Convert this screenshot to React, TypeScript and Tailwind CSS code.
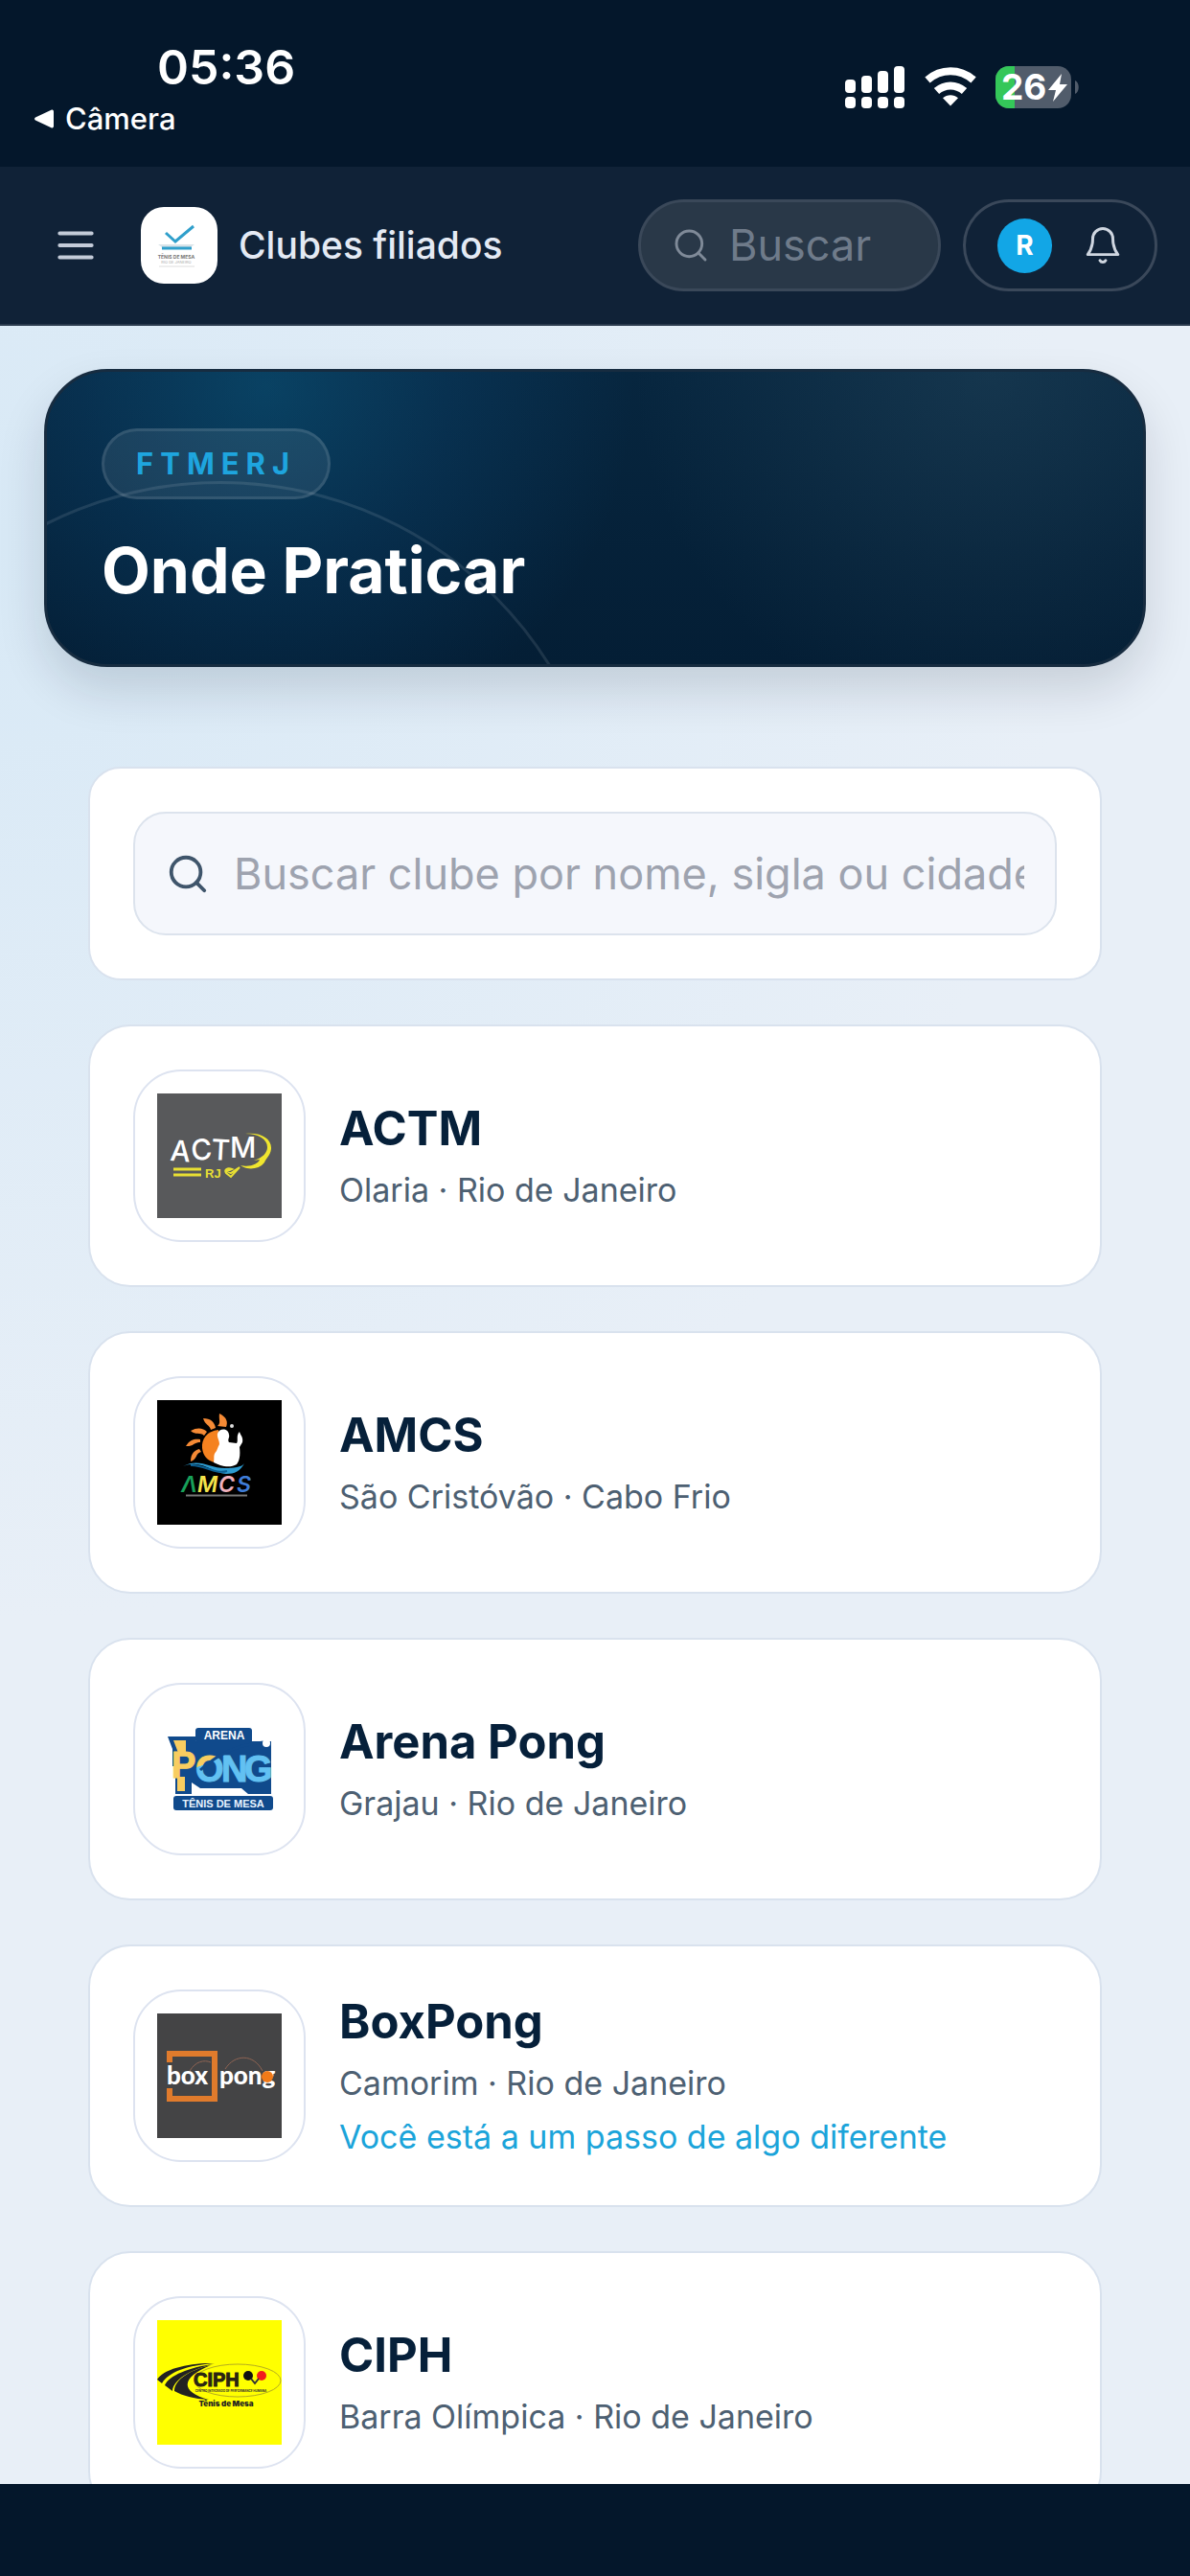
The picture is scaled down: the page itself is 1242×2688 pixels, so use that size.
import { useState } from 'react';
import { Search } from 'lucide-react';

const display = "font-['Inter','Liberation_Sans',sans-serif]";

function StatusBar() {
    return (
        <div className="flex shrink-0 items-start justify-between bg-[#04172b] pl-9 pr-[115px] pt-10 pb-8 text-white">
            <div className="flex flex-col gap-1.5">
                <div className="pl-32 text-[50px] leading-[60px] font-semibold">05:36</div>
                <a href="#camera" className="flex items-center gap-3 text-[31px] leading-9 font-medium">
                    <svg width="20" height="20" viewBox="0 0 20 20" fill="currentColor">
                        <path d="M18 0.5c1 0 2 .6 2 2v15c0 1.400-1 2-2 2L1 11.500c-1.300-.8-1.300-2.200 0-3z" />
                    </svg>
                    Câmera
                </a>
            </div>
            <div className="flex items-center gap-5 pt-7">
                <svg width="64" height="45" viewBox="0 0 64 45" fill="currentColor">
                    <rect x="1" y="15" width="11" height="14" rx="4" />
                    <rect x="18" y="11" width="11" height="18" rx="4" />
                    <rect x="35" y="6" width="11" height="23" rx="4" />
                    <rect x="52" y="1" width="11" height="28" rx="4" />
                    <rect x="1" y="33" width="11" height="12" rx="4" />
                    <rect x="18" y="33" width="11" height="12" rx="4" />
                    <rect x="35" y="33" width="11" height="12" rx="4" />
                    <rect x="52" y="33" width="11" height="12" rx="4" />
                </svg>
                <svg width="54" height="41" viewBox="0 0 54 41" fill="none" stroke="currentColor" strokeWidth="8">
                    <path d="M3 13.500C17 1.200 37 1.200 51 13.500" />
                    <path d="M12.500 25C21 17.500 33 17.500 41.500 25" />
                    <path d="M27 40.500l-8-8.300c4.500-4 11.500-4 16 0z" fill="currentColor" stroke="none" />
                </svg>
                <svg width="88" height="44" viewBox="0 0 88 44">
                    <defs>
                        <clipPath id="battery">
                            <rect width="79" height="44" rx="14" />
                        </clipPath>
                    </defs>
                    <g clipPath="url(#battery)">
                        <rect width="79" height="44" fill="#515c6b" />
                        <rect width="20" height="44" fill="#34c759" />
                    </g>
                    <path d="M83 15c5 2 5 12 0 14z" fill="#515c6b" />
                    <text x="6" y="35" fontSize="37" fontWeight="700" fill="#fff">26</text>
                    <path d="M69 8L55 25h8l-3 12 15-18h-8z" fill="#fff" />
                </svg>
            </div>
        </div>
    );
}

function FederationLogo() {
    return (
        <svg width="80" height="80" viewBox="0 0 80 80" className="shrink-0 rounded-3xl bg-white">
            <path d="M26 27l10 9L55 20" fill="none" stroke="#2f9fcb" strokeWidth="3" />
            <path d="M18 39h38l-4 3H22z" fill="#d9e3e9" />
            <path d="M22 43h31" stroke="#2f9fcb" strokeWidth="3" />
            <text x="37" y="54" fontSize="5" fontWeight="700" textAnchor="middle" fill="#777">TÊNIS DE MESA</text>
            <text x="37" y="59" fontSize="4" textAnchor="middle" fill="#aaa">RIO DE JANEIRO</text>
            <path d="M19 62h37" stroke="#ddd" />
        </svg>
    );
}

function Header() {
    return (
        <header className="flex shrink-0 items-center justify-between border-b-2 border-[#2a3a4d] bg-[#102237] py-[34px] pl-[54px] pr-[34px]">
            <div className="flex items-center gap-[22px]">
                <button type="button" aria-label="Menu" className="mr-[21px] text-[#c3cbd8]">
                    <svg width="50" height="50" viewBox="0 0 24 24" fill="none" stroke="currentColor" strokeWidth="1.900" strokeLinecap="round">
                        <path d="M4 6h16M4 12h16M4 18h16" />
                    </svg>
                </button>
                <FederationLogo />
                <span className="text-[39px] leading-[52px] font-medium text-[#e4eaf4]">Clubes filiados</span>
            </div>
            <div className="flex items-center gap-[23px]">
                <label className="flex h-24 w-[316px] items-center gap-5 rounded-full border-3 border-[#3a4859] bg-[#293848] px-8">
                    <Search size={40} strokeWidth={1.75} className="shrink-0 text-[#7f8a98]" />
                    <input type="text" aria-label="Buscar" placeholder="Buscar" className="w-full min-w-0 bg-transparent text-[45px] leading-[60px] outline-none placeholder:text-[#6f7b8a]" />
                </label>
                <div className="flex h-24 items-center gap-8 rounded-full border-3 border-[#3a485a] px-[33px]">
                    <button type="button" aria-label="Perfil" className="h-[57px] w-[57px] rounded-full bg-[#12a6e6] text-[28px] font-bold text-white">R</button>
                    <button type="button" aria-label="Notificações" className="text-[#cfd6e0]">
                        <svg width="42" height="42" viewBox="0 0 24 24" fill="none" stroke="currentColor" strokeWidth="1.700" strokeLinecap="round" strokeLinejoin="round">
                            <path d="M6 8a6 6 0 0 1 12 0c0 5 1.500 7.500 3 9.500H3C4.500 15.500 6 13 6 8" />
                            <path d="M10.300 21a1.940 1.940 0 0 0 3.400 0" />
                        </svg>
                    </button>
                </div>
            </div>
        </header>
    );
}

function Hero() {
    return (
        <section className="relative overflow-hidden rounded-[66px] border-3 border-[#172c40] bg-[#041c33] bg-[radial-gradient(circle_at_20%_5%,rgba(14,120,170,0.34)_0%,rgba(14,100,160,0.18)_20%,transparent_40%),radial-gradient(circle_at_86%_0%,rgba(70,110,130,0.22)_0%,transparent_36%),linear-gradient(180deg,#07263f,#041e35)] px-[57px] pt-[59px] pb-14 shadow-[0_24px_50px_rgba(4,23,43,0.14)]">
            <div className="absolute -left-[225px] top-[114px] h-[812px] w-[812px] rounded-full border-3 border-white/10" />
            <span className="relative flex w-fit items-center rounded-full border-3 border-white/10 bg-white/8 px-[33px] py-4 text-[31px] leading-9 font-bold tracking-[7px] text-[#1ea5df]">FTMERJ</span>
            <h1 className={`relative mt-8 text-[66px] leading-[84px] font-bold text-white ${display}`}>Onde Praticar</h1>
        </section>
    );
}

function ActmLogo() {
    return (
        <svg width="130" height="130" viewBox="0 0 130 130">
            <rect width="130" height="130" fill="#58595b" />
            <text x="13 36 56 76" y="70 70 69 67" rotate="4 -4 3 0" fontSize="30" fontWeight="500" fill="#fff">ACTM</text>
            <path d="M92 42c16-2 28 5 27 16-1 7-5 9-7 14-6 8-19 8-25 3 10 2 18-1 20-6-2 0-4 1-6 1 9-3 14-8 14-14 0-8-9-14-23-14z" fill="#f0e62e" />
            <path d="M17 79h29M17 85h29" stroke="#e8df33" strokeWidth="3" />
            <text x="50" y="88" fontSize="13" fontWeight="700" fill="#e8df33" fontFamily="Liberation Sans, sans-serif">RJ</text>
            <path d="M78 79c-5-2-8 1-6 4l5 4 9-10-9 6-4-2z" fill="none" stroke="#e8df33" strokeWidth="2" />
        </svg>
    );
}

function AmcsLogo() {
    return (
        <svg width="130" height="130" viewBox="0 0 130 130">
            <rect width="130" height="130" fill="#000" />
            <path d="M64 31c-12 1-18 10-17 19 1 8 5 13 13 15l6-10z" fill="#f58220" />
            <g fill="#f58a35">
                <path d="M63 27c4-3 1-7 2-13 8 4 9 9 7 14z" />
                <path d="M56 31c-1-5-6-5-8-12 8 0 12 4 13 10z" />
                <path d="M49 37c-4-4-9 0-14-5 7-4 13-3 17 1z" />
                <path d="M45 44c-5-1-8 5-15 4 4-7 10-8 15-7z" />
                <path d="M46 54c-6 1-4 8-11 10 0-9 5-12 9-13z" />
            </g>
            <path d="M63 35c2-6 11-6 12 1 1 4-2 5 0 8l8 1c2-3-1-8 3-12 1 4 4 5 3 11l-3 5c1 9 0 14-3 18-8 5-18 1-24-2 1-5-1-8 3-12l2-5c3-4-2-8-1-13z" fill="#fff" />
            <circle cx="78" cy="27" r="2" fill="#ddd" />
            <path d="M27 69c20-8 32 8 45 8 9 0 15-3 19-11-2 4-12 5-20 5-17 0-27-11-44-2z" fill="#2d9bd0" />
            <path d="M35 68c14-1 25 10 38 6" fill="none" stroke="#0b5f92" strokeWidth="2" />
            <g fontSize="23" fontWeight="600" fontStyle="italic">
                <text x="25" y="96" fill="#18a05a">Λ</text>
                <text x="42" y="96" fill="#f4e34b">M</text>
                <text x="64" y="96" fill="#efb1bd">C</text>
                <text x="83" y="96" fill="#3f7dd8">S</text>
            </g>
            <path d="M30 99.500h64" stroke="#777" strokeWidth="2" />
        </svg>
    );
}

function ArenaPongLogo() {
    const bold = 'Liberation Sans, sans-serif';
    return (
        <svg width="130" height="130" viewBox="0 0 130 130">
            <defs>
                {/* yellow above the swing of the ball, blue below it */}
                <linearGradient id="pong" gradientUnits="userSpaceOnUse" x1="50" y1="20" x2="80" y2="85">
                    <stop offset="0.5" stopColor="#f8cd60" />
                    <stop offset="0.5" stopColor="#62c1f2" />
                </linearGradient>
            </defs>
            <path d="M11 31h29v5h79v55H95l-7-6H45l-9-6v12H19V62h-3V44z" fill="#104a8c" />
            <g fontWeight="700" fontSize="38" fontFamily={bold}>
                <text x="15" y="74" fill="#f8cd60" stroke="#f8cd60">P</text>
                <text x="40 67 91" y="78" fill="url(#pong)" stroke="url(#pong)">ONG</text>
            </g>
            <path d="M17 35h13v13h-8zM21 73h8v15h-8z" fill="#f8cd60" />
            <path d="M45 66c18-16 36-26 66-29" fill="none" stroke="#104a8c" strokeWidth="3" />
            <circle cx="114" cy="38" r="4" fill="#fff" />
            <rect x="40" y="22" width="59" height="16" rx="3" fill="#104a8c" />
            <text x="70" y="34" fontSize="12" fontWeight="700" textAnchor="middle" fill="#fff" fontFamily={bold}>ARENA</text>
            <rect x="17" y="93" width="104" height="15" rx="3" fill="#104a8c" />
            <text x="69" y="105" fontSize="11" fontWeight="700" textAnchor="middle" fill="#e8f4ff" fontFamily={bold}>TÊNIS DE MESA</text>
        </svg>
    );
}

function BoxPongLogo() {
    return (
        <svg width="130" height="130" viewBox="0 0 130 130">
            <rect width="130" height="130" fill="#444445" />
            <path d="M13 51V42h47v47H13V78" fill="none" stroke="#e07b2c" strokeWidth="6" />
            <path d="M34 60c6-10 15-12 22-9M71 58c10-16 30-16 39 2" fill="none" stroke="#8f6453" />
            <g fontWeight="900" fill="#fff" fontFamily="Lato, sans-serif">
                <text x="10" y="74" fontSize="26">box</text>
                <text x="65" y="74" fontSize="26">pong</text>
            </g>
            <circle cx="115" cy="66" r="6" fill="#f27a18" />
        </svg>
    );
}

function CiphLogo() {
    return (
        <svg width="130" height="130" viewBox="0 0 130 130">
            <rect width="130" height="130" fill="#ff0" />
            <ellipse cx="84" cy="63" rx="45" ry="17" fill="none" stroke="#b5ad20" />
            <g fill="#222">
                <path d="M60 45C34 44 6 51 0 62l5 4c7-12 27-19 55-21z" />
                <path d="M58 46C34 49 12 58 8 68l8 6c1-12 18-22 42-28z" />
                <path d="M56 47C34 52 18 62 18 74c9 5 20 8 36 9C24 75 24 60 56 47z" />
            </g>
            <text x="38" y="69" fontSize="20" fontWeight="700" fill="#2a2512" stroke="#2a2512" fontFamily="Liberation Sans, sans-serif">CIPH</text>
            <circle cx="95" cy="58" r="5" fill="#111" />
            <circle cx="109" cy="58" r="5" fill="#f21d1d" />
            <path d="M98 61l4 5 4-5" fill="none" stroke="#333" strokeWidth="2" />
            <text x="77" y="75" fontSize="3" fontWeight="700" textAnchor="middle" fill="#333">CENTRO INTEGRADO DE PERFORMANCE HUMANA</text>
            <text x="72" y="90" fontSize="8" fontWeight="900" textAnchor="middle" fill="#222">Tênis de Mesa</text>
        </svg>
    );
}

const clubs = [
    { name: 'ACTM', place: 'Olaria · Rio de Janeiro', Logo: ActmLogo },
    { name: 'AMCS', place: 'São Cristóvão · Cabo Frio', Logo: AmcsLogo },
    { name: 'Arena Pong', place: 'Grajau · Rio de Janeiro', Logo: ArenaPongLogo },
    { name: 'BoxPong', place: 'Camorim · Rio de Janeiro', note: 'Você está a um passo de algo diferente', Logo: BoxPongLogo },
    { name: 'CIPH', place: 'Barra Olímpica · Rio de Janeiro', Logo: CiphLogo },
];

function ClubCard({ club }: any) {
    const { name, place, note, Logo } = club;
    return (
        <li className="flex items-center gap-[35px] rounded-[44px] border-2 border-[#d9e2ee] bg-white p-[45px]">
            <div className="flex h-[180px] w-[180px] shrink-0 items-center justify-center rounded-[50px] border-2 border-[#dde3f0] bg-white">
                <Logo />
            </div>
            <div className="flex min-w-0 flex-col gap-1.5">
                <h2 className={`text-[49px] leading-[66px] font-bold text-[#06203a] ${display}`}>{name}</h2>
                <p className="text-[34px] leading-[50px] text-[#4d6072]">{place}</p>
                {note && <p className="text-[34px] leading-[50px] text-[#1ba4da]">{note}</p>}
            </div>
        </li>
    );
}

function App() {
    const [search, setSearch] = useState('');
    const filtered = clubs.filter((c) => `${c.name} ${c.place}`.toLowerCase().includes(search.toLowerCase()));

    return (
        <div className="flex h-screen flex-col bg-[#04172b] font-['Inter','Liberation_Sans',sans-serif]">
            <StatusBar />
            <Header />
            <main className="min-h-0 flex-1 overflow-y-auto bg-[#e8eff7] bg-[radial-gradient(ellipse_90%_50%_at_0%_10%,#d8e9f6_0%,transparent_100%)] px-[46px] pt-[45px] [scrollbar-width:none]">
                <Hero />
                <div className="flex flex-col gap-[46px] px-[46px] pt-[104px] pb-12">
                    <div className="rounded-[34px] border-2 border-[#d9e2ee] bg-white p-[45px]">
                        <label className="flex h-[129px] items-center gap-[25px] rounded-[34px] border-2 border-[#dce3ed] bg-[#f5f7fc] px-8">
                            <Search size={46} strokeWidth={2} className="shrink-0 text-[#3f556b]" />
                            <input
                                type="text"
                                aria-label="Buscar clube"
                                value={search}
                                onChange={(e) => setSearch(e.target.value)}
                                placeholder="Buscar clube por nome, sigla ou cidade"
                                className="w-full min-w-0 bg-transparent text-[45px] leading-[60px] text-[#06203a] outline-none placeholder:text-[#9ea3af]"
                            />
                        </label>
                    </div>
                    <ul className="flex flex-col gap-[46px]">
                        {filtered.map((club) => (
                            <ClubCard key={club.name} club={club} />
                        ))}
                    </ul>
                </div>
            </main>
            <div className="h-24 shrink-0 bg-[#04172b]" />
        </div>
    );
}

export default App;
